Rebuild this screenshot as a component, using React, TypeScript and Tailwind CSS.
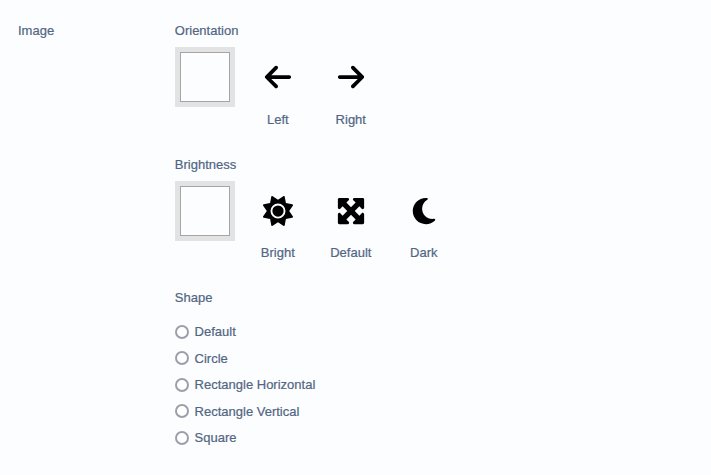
import type { ReactNode } from "react";
import { FaArrowLeft, FaArrowRight, FaMaximize, FaMoon, FaSun } from "react-icons/fa6";

type Option = { label: string; icon: ReactNode };

const orientations: Option[] = [
  { label: "Left", icon: <FaArrowLeft size={30} /> },
  { label: "Right", icon: <FaArrowRight size={30} /> },
];

const brightnesses: Option[] = [
  { label: "Bright", icon: <FaSun size={30} /> },
  { label: "Default", icon: <FaMaximize size={30} /> },
  { label: "Dark", icon: <FaMoon size={30} /> },
];

const shapes = ["Default", "Circle", "Rectangle Horizontal", "Rectangle Vertical", "Square"];

function IconGroup({ title, options }: { title: string; options: Option[] }) {
  return (
    <section className="h-[133.3px]">
      <h3 className="mb-[6px] h-5 leading-5">{title}</h3>
      <div className="flex gap-[13px]">
        <button
          type="button"
          aria-label="None"
          className="size-[60px] bg-[#e3e3e3] p-[5px]"
        >
          <span className="block size-full border border-[#a5a5a5] bg-[#fbfdff]" />
        </button>
        {options.map((option) => (
          <button key={option.label} type="button" className="w-[60px]">
            <span className="flex h-[60px] items-center justify-center text-black">
              {option.icon}
            </span>
            <span className="block pt-[2.3px] leading-5">{option.label}</span>
          </button>
        ))}
      </div>
    </section>
  );
}

export default function App() {
  return (
    <main className="flex h-[475px] w-[711px] bg-[#fbfdff] pl-[18px] pt-[21.4px] font-['Liberation_Sans',Arial,sans-serif] text-[13px] text-[#526582] [-webkit-text-stroke:0.2px_#526582]">
      <h2 className="w-[156.8px] leading-5">Image</h2>
      <div>
        <IconGroup title="Orientation" options={orientations} />
        <IconGroup title="Brightness" options={brightnesses} />
        <section>
          <h3 className="mb-[10.4px] h-5 leading-5">Shape</h3>
          {shapes.map((shape) => (
            <label key={shape} className="flex h-[26.6px] items-center">
              <input
                type="radio"
                name="shape"
                className="mr-[5.8px] size-[14px] appearance-none rounded-full border-2 border-[#9d9eab] bg-white"
              />
              {shape}
            </label>
          ))}
        </section>
      </div>
    </main>
  );
}
